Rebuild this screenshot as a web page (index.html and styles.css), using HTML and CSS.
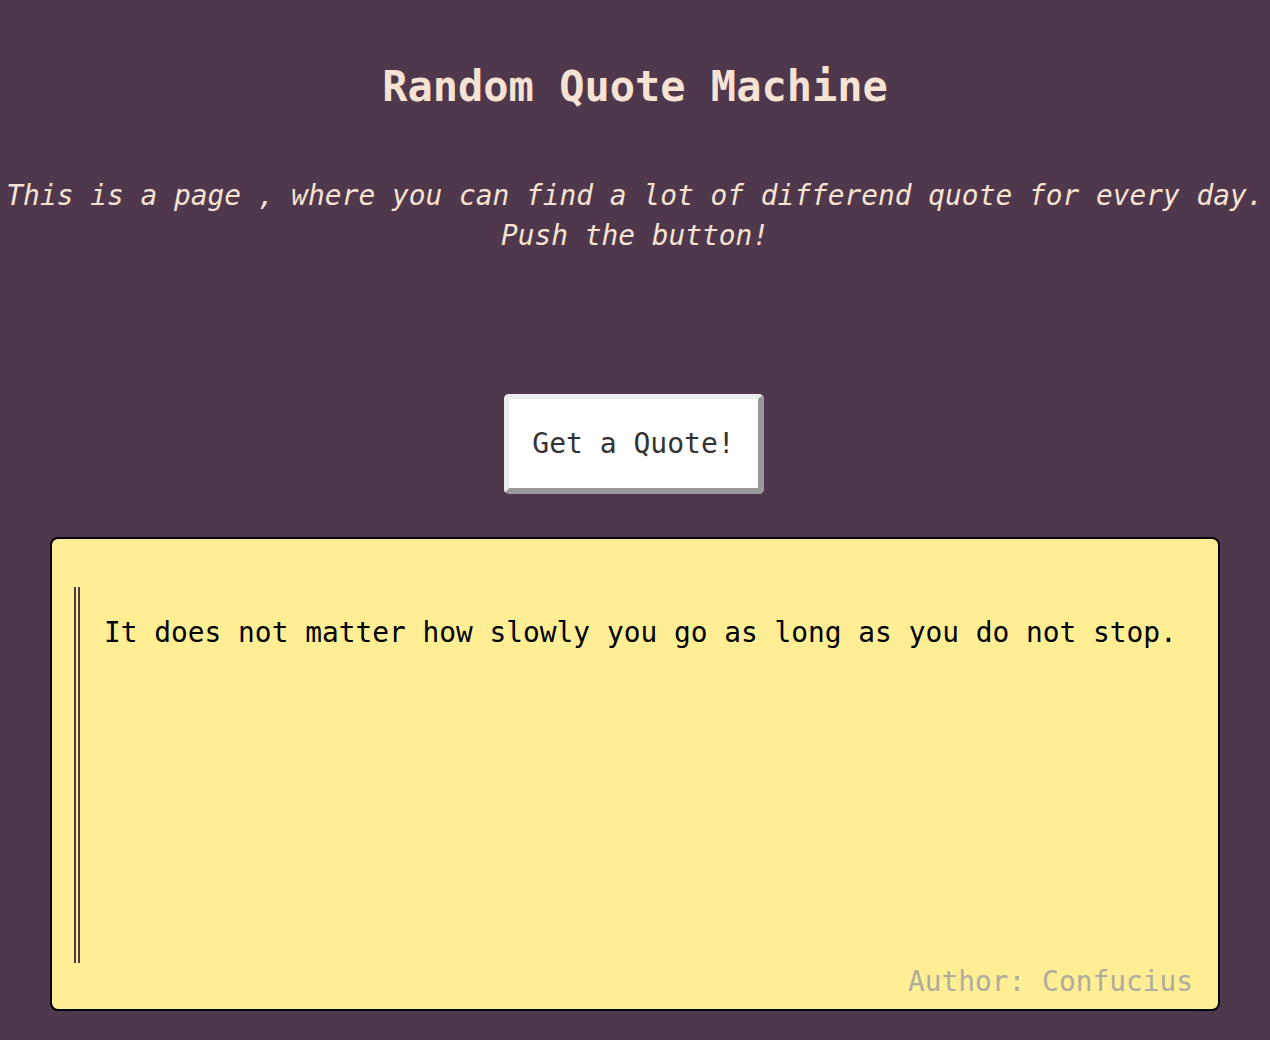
FILE: index.html
```html
<!DOCTYPE html>
<html lang="en">
<head>
<meta charset="utf-8">
<title>Random Quote Machine</title>
<link rel="stylesheet" href="styles.css">
</head>
<body>
<header class="intro">
  <h1 class="title">Random Quote Machine</h1>
  <p class="subtitle">This is a page , where you can find a lot of differend quote for every day.<br>Push the button!</p>
</header>
<div class="actions">
  <button class="quote-btn" type="button">Get a Quote!</button>
</div>
<section class="quote-box">
  <blockquote class="quote">
    <p class="quote-text">It does not matter how slowly you go as long as you do not stop.</p>
  </blockquote>
  <p class="author">Author: Confucius</p>
</section>
</body>
</html>
```

FILE: styles.css
```css
html, body {
  margin: 0;
  padding: 0;
}
body {
  background: #4f384c;
  font-family: "DejaVu Sans Mono", "Liberation Mono", monospace;
  min-height: 1040px;
  overflow: hidden;
}
.intro {
  text-align: center;
  color: #f7e3d3;
}
.title {
  margin: 62px 0 0;
  font-size: 42px;
  font-weight: bold;
  line-height: normal;
}
.subtitle {
  margin: 65px -12px 0;
  font-size: 27.85px;
  font-style: italic;
  line-height: 40px;
}
.actions {
  display: flex;
  justify-content: center;
  margin-top: 138px;
}
.quote-btn {
  font-family: "DejaVu Sans Mono", "Liberation Mono", monospace;
  font-size: 28px;
  line-height: normal;
  color: #333;
  background: #fff;
  padding: 28px 23px;
  border-style: solid;
  border-width: 5px 6px 6px 5px;
  border-color: #ececec #999 #999 #ececec;
  border-radius: 5px;
  margin-left: -2px;
}
.quote-box {
  margin: 43px 50px 0;
  border: 2px solid #000;
  border-radius: 8px;
  background: #ffee93;
  padding: 48px 25px 11px 22px;
}
.quote {
  margin: 0;
  height: 376px;
  box-sizing: border-box;
  border-left: 6px double #4f384c;
  padding: 29px 0 0 24px;
}
.quote-text {
  margin: 0;
  font-size: 27.85px;
  line-height: normal;
  color: #000;
}
.author {
  margin: 2px 0 0;
  text-align: right;
  font-size: 27.85px;
  line-height: normal;
  color: #aeab9f;
}
```
